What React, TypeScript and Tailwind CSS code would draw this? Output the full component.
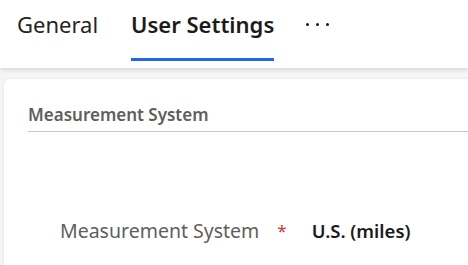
import React from "react";

const font = { fontFamily: '"Noto Sans", "Open Sans", sans-serif' };

const Tab: React.FC<{ label: string; active?: boolean }> = ({ label, active }) => {
    return (
        <div className="relative flex h-full items-center pb-[12px]">
            <span className={active ? "text-[22px] font-semibold text-[#1b1b1b]" : "text-[22px] text-[#242424]"}>
                {label}
            </span>
            {active && <div className="absolute bottom-0 left-0 right-0 h-[3px] bg-[#2266e3]"/>}
        </div>
    )
}

export default function App() {
    return (
        <div className="h-[265px] w-[468px] overflow-hidden bg-[#f5f5f5]" style={font}>
            <div className="relative z-10 h-[68px] bg-white shadow-[0_2px_4px_rgba(0,0,0,0.12)]">
                <div className="flex h-[61px] items-stretch pl-[17px]">
                    <Tab label="General"/>
                    <div className="w-[33px]"/>
                    <Tab label="User Settings" active/>
                    <div className="flex items-center gap-[7.5px] pb-[12px] pl-[32px]">
                        <span className="h-[2.5px] w-[2.5px] rounded-full bg-[#1b1b1b]"/>
                        <span className="h-[2.5px] w-[2.5px] rounded-full bg-[#1b1b1b]"/>
                        <span className="h-[2.5px] w-[2.5px] rounded-full bg-[#1b1b1b]"/>
                    </div>
                </div>
            </div>

            <div className="ml-[4px] mt-[11px] h-[200px] rounded-tl-[6px] bg-white pl-[24px] shadow-[0_0_2px_rgba(0,0,0,0.12)]">
                <div className="pt-[25px]">
                    <div className="text-[17px] font-semibold leading-[22px] text-[#605e5c]">Measurement System</div>
                    <div className="mt-[5px] border-b border-[#c8c6c4]"/>
                </div>

                <div className="mt-[84px] flex items-center pl-[32px]">
                    <span className="text-[19.5px] text-[#605e5c]">Measurement System</span>
                    <span className="ml-[18px] text-[17px] text-[#d13438]">*</span>
                    <span className="ml-[25px] text-[18.5px] font-semibold text-[#1b1b1b]">U.S. (miles)</span>
                </div>
            </div>
        </div>
    )
}
